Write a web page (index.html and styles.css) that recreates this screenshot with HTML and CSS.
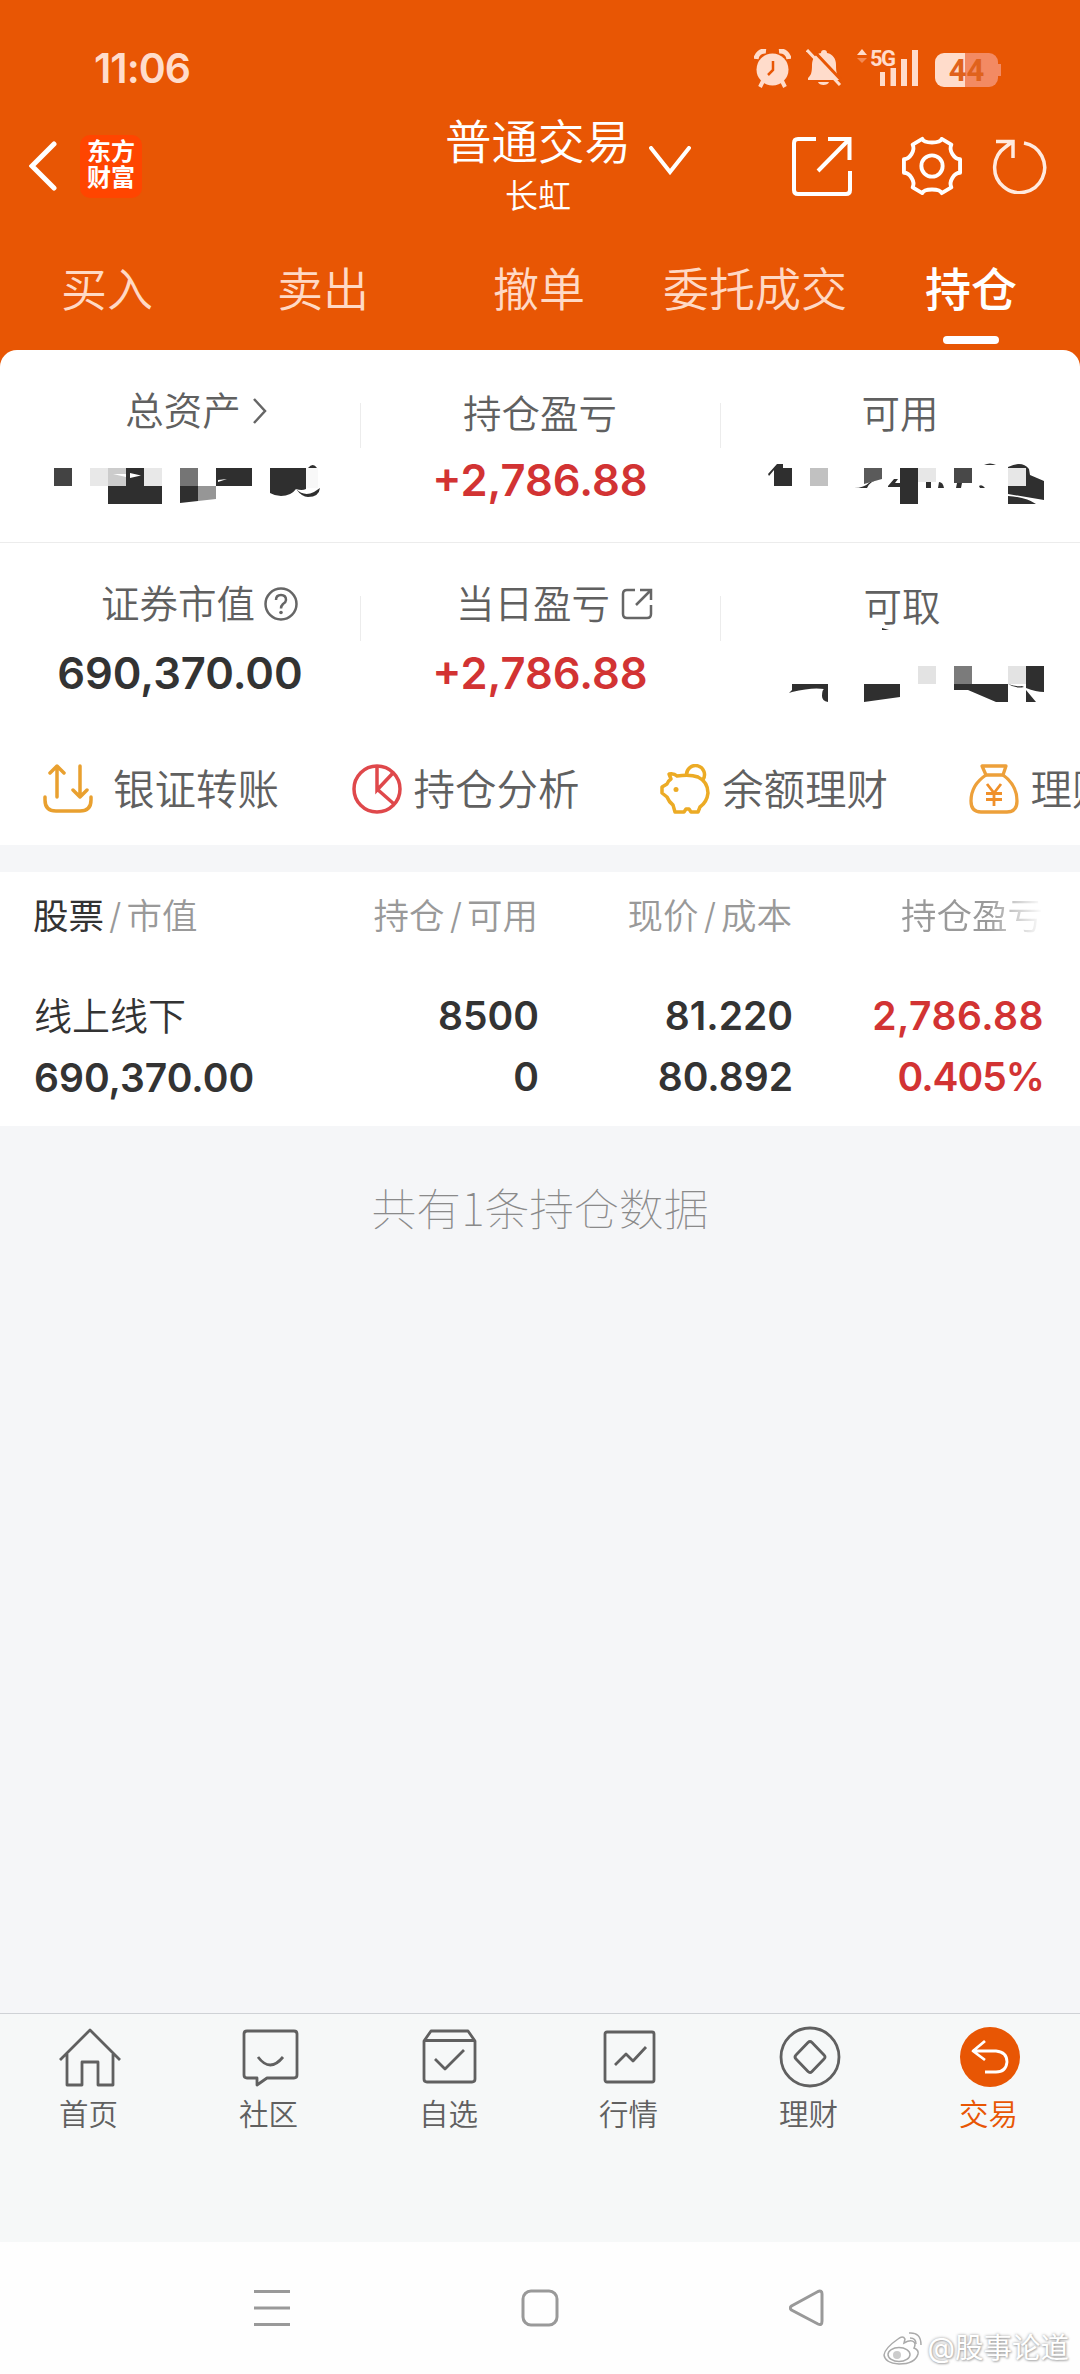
FILE: index.html
```html
<!DOCTYPE html>
<html lang="zh-CN">
<head>
  <meta charset="UTF-8">
  <meta name="viewport" content="width=device-width, initial-scale=1.0">
  <title>普通交易 - 持仓</title>
  <link rel="stylesheet" href="styles.css">
</head>
<body>

  <header class="header">
    <div class="statusbar">
      <span class="time">11:06</span>
      <div class="status-icons">
        <svg class="alarm" width="37" height="39" viewBox="0 0 37 39">
          <path d="M2 10 A9 9 0 0 1 12 2 M35 10 A9 9 0 0 0 25 2" fill="none" stroke="#ffdccb" stroke-width="5"/>
          <circle cx="18.500" cy="20.500" r="16" fill="#ffdccb"/>
          <path d="M9 32 L6 38 M28 32 L31 38" stroke="#ffdccb" stroke-width="4"/>
          <path d="M19 12 V21 L14 26" fill="none" stroke="#e85604" stroke-width="2.500"/>
        </svg>
        <svg class="bell" width="36" height="38" viewBox="0 0 36 38">
          <path d="M18 1 c2 0 3 1 3 3 c6 1 9 6 9 12 c0 8 1 10 4 13 v2 H2 v-2 c3 -3 4 -5 4 -13 c0 -6 3 -11 9 -12 c0 -2 1 -3 3 -3z M12 33 h11 c-1 4 -10 4 -11 0z" fill="#ffdccb"/>
          <path d="M4 -2 L38 34" stroke="#e85604" stroke-width="3"/>
          <path d="M1 1 L34 36" stroke="#ffdccb" stroke-width="3"/>
        </svg>
        <svg class="signal" width="62" height="54" viewBox="0 -8 62 54">
          <path d="M0 6 L5 0 L10 6z" fill="#ffdccb"/>
          <path d="M0 9 L5 14 L10 9z" fill="#f38a55"/>
          <text x="13" y="16.500" class="net">5G</text>
          <path d="M23 23h5v14h-5z M33.500 19h5.500v18h-5.500z M44 10h6v27h-6z M55 1h6v36h-6z" fill="#ffdccb"/>
        </svg>
        <div class="battery"><span>44</span></div>
      </div>
    </div>

    <div class="titlebar">
      <div class="left">
        <svg width="28" height="50" viewBox="0 0 28 50"><path d="M25 3 L3 25 L25 47" fill="none" stroke="#fff" stroke-width="5" stroke-linecap="round"/></svg>
        <div class="logo">东方<br>财富</div>
      </div>
      <div class="title">
        <h1>普通交易
          <svg width="42" height="29" viewBox="0 0 42 29"><path d="M2 2 L21 26 L40 2" fill="none" stroke="#fff" stroke-width="4" stroke-linecap="round"/></svg>
        </h1>
        <p>长虹</p>
      </div>
      <div class="actions">
        <svg class="share" width="60" height="60" viewBox="0 0 60 60"><path d="M24 3 H6 Q2 3 2 7 V54 Q2 58 6 58 H54 Q58 58 58 54 V35 M36 3 H57.500 V24 M57 3.500 L26 35" fill="none" stroke="#fff" stroke-width="4"/></svg>
        <svg class="gear" width="60" height="60" viewBox="0 0 62 62">
          <path d="M21 3 C23 8 39 8 41 3 L51 9 C48 15 54 24 60 24 V38 C54 38 48 47 51 53 L41 59 C39 54 23 54 21 59 L11 53 C14 47 8 38 2 38 V24 C8 24 14 15 11 9z" fill="none" stroke="#fff" stroke-width="4" stroke-linejoin="round"/>
          <circle cx="31" cy="31" r="11" fill="none" stroke="#fff" stroke-width="4"/>
        </svg>
        <svg width="56" height="56" viewBox="0 0 56 56"><path d="M33 5 A25 25 0 1 1 14.500 9 L21 4 M5 3.500 H22 V20" fill="none" stroke="#ffeadf" stroke-width="3.500"/></svg>
      </div>
    </div>

    <nav class="tabs">
      <a>买入</a>
      <a>卖出</a>
      <a>撤单</a>
      <a>委托成交</a>
      <a class="active">持仓</a>
    </nav>
  </header>

  <section class="assets">
    <div class="asset-row">
      <div class="cell">
        <div class="label total-label">总资产<svg class="more" width="15" height="28" viewBox="0 0 15 28"><path d="M2 2 L13 14 L2 26" fill="none" stroke="#666" stroke-width="2.500"/></svg></div>
        <svg class="mosaic" width="360" height="50" viewBox="0 455 360 50">
          <path d="M54 468h18v18h-18z" fill="#434343"/>
          <path d="M90 468h18v18h-18z M144 468h18v18h-18z" fill="#e8e8e8"/>
          <path d="M108 468h18v18h-18z" fill="#ccc"/>
          <path d="M180 468h18v18h-18z" fill="#757575"/>
          <path d="M198 486h18v13l-18 2z" fill="#969696"/>
          <path d="M126 468h18v18h18v18h-54v-18h18z M180 486h18v15l-18 2z M216 468h36v18h-36z M270 468h36v21q-4 2 -10 0 q-5 7 -15 7 q-6 0 -11 -3z M308 468q5 -6 9 0z M296 489q8 8 18 3l6 -4q-1 9 -12 9q-6 0 -12 -8z" fill="#2f2f2f"/>
          <path d="M306 468h12v20h-12z" fill="#f8f8f8"/>
          <path d="M113 474l13 0v3z M130 473l11 2.500l-11 2.500z M218 480l9 -1l-9 3z" fill="#fff"/>
        </svg>
      </div>
      <div class="cell">
        <div class="label low">持仓盈亏</div>
        <div class="value red">+2,786.88</div>
      </div>
      <div class="cell">
        <div class="label low">可用</div>
        <svg class="mosaic" width="360" height="50" viewBox="720 455 360 50">
          <path d="M774 468h18v18h-18z M768 474l9 -10h6v4l-9 2l-5 6z M854 488q10 0 16 -6l8 -2q-8 1 -11 8z M888 486l6 -7h4l-3 4h5v4h-12z M900 468h18v36h-18z M926 482h5v6h-5z M939 482q4 0 5 6h-6z M957 483h5l-1 5h-5z M979 486q3 -2 6 2h-5z M984 465q6 -3 12 0z M1008 467q14 -7 21 2l1 6l14 6v19l-36 -6z M1008 496q18 1 28 8h-28z" fill="#2f2f2f"/>
          <path d="M810 468h18v18h-18z" fill="#c1c1c1"/>
          <path d="M864 468h18v11l-18 5z" fill="#5a5a5a"/>
          <path d="M918 468h18v14h-18z M1008 468h18v18h-18z" fill="#e7e7e7"/>
          <path d="M954 468h18v15h-18z" fill="#484848"/>
        </svg>
      </div>
    </div>

    <div class="asset-row">
      <div class="cell">
        <div class="label">证券市值<svg class="help" width="34" height="34" viewBox="0 0 34 34"><circle cx="17" cy="17" r="15.500" fill="none" stroke="#666" stroke-width="2.500"/><path d="M12 13 Q12 8 17 8 Q22 8 22 13 Q22 15 19 17 Q17 19 17 21.500" fill="none" stroke="#666" stroke-width="2.500"/><circle cx="17" cy="25.500" r="1.800" fill="#666"/></svg></div>
        <div class="value">690,370.00</div>
      </div>
      <div class="cell">
        <div class="label today">当日盈亏<svg class="open" width="32" height="32" viewBox="0 0 32 32"><path d="M14 2 H6 Q2 2 2 6 V26 Q2 30 6 30 H26 Q30 30 30 26 V17 M19 2 H30 V12 M29.500 2.500 L15 17" fill="none" stroke="#666" stroke-width="2.500"/></svg></div>
        <div class="value red">+2,786.88</div>
      </div>
      <div class="cell">
        <div class="label low last">可取</div>
        <svg class="mosaic" width="360" height="75" viewBox="720 628 360 75">
          <path d="M882 628l7 2h-7z M792 684h36v18q-6 -1 -6 -6q0 -6 2 -7q-12 -2 -32 3l-3 1l3 -3z M864 684h36v13l-36 5z M954 684h54v18h-12l-28 -12h-14z M1008 684q8 3 14 2l2 1q-8 2 -16 -3z M1026 666h18v26q-8 0 -18 -4z M1026 690l10 12h-10z" fill="#2f2f2f"/>
          <path d="M918 666h18v18h-18z M1008 666h18v18h-18z" fill="#e3e3e3"/>
          <path d="M954 666h18v18h-18z" fill="#7b7b7b"/>
        </svg>
      </div>
    </div>

    <div class="shortcuts">
      <a class="first">
        <svg width="50" height="50" viewBox="0 0 50 50" fill="none" stroke="#e9a02f" stroke-width="3.500" stroke-linecap="round" stroke-linejoin="round"><path d="M14 33 V3 M7 9 L14 2 L21 9 M37 2 V33 M30 26 L37 33 L44 26 M2 33 V36 Q2 47 13 47 H37 Q48 47 48 36 V33"/></svg>
        <span>银证转账</span>
      </a>
      <a>
        <svg width="50" height="50" viewBox="0 0 50 50" fill="none" stroke="#df484b" stroke-width="3.500"><circle cx="25" cy="25" r="23"/><path d="M25 2 V26 L41 9 M25 25 L42 40"/></svg>
        <span>持仓分析</span>
      </a>
      <a>
        <svg width="50" height="50" viewBox="0 0 50 50" fill="none" stroke="#ecab25" stroke-width="3.500" stroke-linejoin="round"><path d="M26.500 11 A9 9 0 1 1 43 15.500"/><path d="M9 10 Q14 9 17 12 Q30 10 38 13 Q48 18 48 29 Q47 38 40 43 L38 48 H31 L29 45 H26 L24 48 H15 L13 41 Q9 38 7 33 L2 29 V23 L7 20 Q8 17 11 15z"/><circle cx="16" cy="25.500" r="2.500" fill="#ecab25" stroke="none"/></svg>
        <span>余额理财</span>
      </a>
      <a>
        <svg width="50" height="50" viewBox="0 0 50 50" fill="none" stroke="#eda03a" stroke-width="3.300" stroke-linejoin="round"><path d="M13 2 H37 L34 11 H17z"/><path d="M17 11 Q2 21 2 37 Q2 48 12 48 H38 Q48 48 48 37 Q48 21 34 11"/><path stroke="#f0902a" stroke-width="2.800" d="M18 20 L25 29 L32 20 M25 29 V42 M17 29.500 H33 M17 35.500 H33"/></svg>
        <span>理财</span>
      </a>
    </div>
  </section>

  <section class="holdings">
    <div class="row head">
      <div><b>股票</b><i>/</i>市值</div>
      <div>持仓<i>/</i>可用</div>
      <div>现价<i>/</i>成本</div>
      <div class="fade">持仓盈亏</div>
    </div>
    <div class="row">
      <div><span class="name">线上线下</span><br>690,370.00</div>
      <div>8500<br>0</div>
      <div>81.220<br>80.892</div>
      <div class="red"><span class="profit">2,786.88</span><br><span class="rate">0.405%</span></div>
    </div>
  </section>

  <p class="total">共有1条持仓数据</p>

  <nav class="tabbar">
    <a>
      <svg width="62" height="62" viewBox="0 0 62 62"><path d="M1 34 L31 4 L61 34 M8 28 V59 H23 V36 H39 V59 H54 V28"/></svg>
      <span>首页</span>
    </a>
    <a>
      <svg width="62" height="62" viewBox="0 0 62 62"><path d="M8 5 H55 Q58 5 58 8 V49 Q58 52 55 52 H28 L18 59 V52 H8 Q5 52 5 49 V8 Q5 5 8 5z M19 31 Q31 47 44 31"/></svg>
      <span>社区</span>
    </a>
    <a>
      <svg width="62" height="62" viewBox="0 0 62 62"><path d="M5 15 L12 5 H49 L56 15 V53 Q56 56 53 56 H8 Q5 56 5 53z M5 14.500 H56 M16 33 L26 43 L45 24"/></svg>
      <span>自选</span>
    </a>
    <a>
      <svg width="62" height="62" viewBox="0 0 62 62"><rect x="6" y="6" width="49" height="50" rx="2"/><path d="M16 39 L27 28 L34 35 L47 21"/></svg>
      <span>行情</span>
    </a>
    <a>
      <svg width="62" height="62" viewBox="0 0 62 62"><circle cx="31" cy="31" r="29"/><path d="M29 16.500 Q31 14.500 33 16.500 L45 29 Q47 31 45 33 L33 45.500 Q31 47.500 29 45.500 L17 33 Q15 31 17 29z"/></svg>
      <span>理财</span>
    </a>
    <a class="active">
      <svg width="62" height="62" viewBox="0 0 62 62"><circle class="disc" cx="31" cy="31" r="30"/><path d="M26 15 L14 25 L26 34 M14 25 H37 Q48 26 48 36 Q47 46 37 46 H26"/></svg>
      <span>交易</span>
    </a>
  </nav>

  <footer class="sysnav">
    <svg width="38" height="38" viewBox="0 0 38 38"><path d="M1 2.500 H37 M1 19 H37 M1 35.500 H37"/></svg>
    <svg width="38" height="38" viewBox="0 0 38 38"><rect x="2" y="2" width="34" height="34" rx="8"/></svg>
    <svg width="38" height="38" viewBox="0 0 38 38"><path d="M29 2.500 Q33 1 33 5 V32 Q33 37 29 35 L2.500 21 Q0 19 2.500 17z"/></svg>
    <div class="watermark">
      <svg width="40" height="34" viewBox="0 0 40 34">
        <path d="M15 8 Q20 4 22 8 L21 12 Q28 8 31 11 Q33 13 31 17 Q36 19 35 23 Q32 33 16 33 Q2 32 1 24 Q2 17 15 8z"/>
        <ellipse cx="16" cy="23.500" rx="11" ry="7"/>
        <circle class="eye" cx="14" cy="24" r="4"/>
        <path class="wave" d="M26 2 Q38 1 38 14 M27 7 Q33 7 33 13"/>
      </svg>
      @股事论道
    </div>
  </footer>

</body>
</html>
```

FILE: styles.css
```css
* {
  box-sizing: border-box;
}

body {
  margin: 0;
  width: 1080px;
  height: 2374px;
  display: flex;
  flex-direction: column;
  overflow: hidden;
  background-color: #f5f6f8;
  color: #333;
  font-family: Inter, "Noto Sans CJK SC", sans-serif;
  font-weight: 350;
}

svg {
  display: block;
  flex: none;
}

h1, p {
  margin: 0;
  font-weight: inherit;
}

/* header */
.header {
  height: 374px;
  margin-bottom: -24px;
  flex: none;
  background-color: #e85604;
  color: #fff;
}

.statusbar {
  display: flex;
  justify-content: space-between;
  align-items: center;
  height: 108px;
  padding: 28px 79px 0 94px;
}

.time {
  font-size: 41px;
  font-weight: 600;
  letter-spacing: -1px;
  color: #ffdccb;
}

.status-icons {
  display: flex;
  align-items: center;
}

.bell {
  margin-left: 15px;
}

.signal {
  margin-left: 15px;
}

.net {
  font-family: Roboto, sans-serif;
  font-size: 22px;
  font-weight: 700;
  fill: #ffdccb;
  letter-spacing: -1.5px;
}

.battery {
  position: relative;
  width: 63px;
  height: 34px;
  margin: 4px 3px 0 16px;
  border-radius: 9px;
  background: linear-gradient(90deg, #ffdccb 48%, #f38a63 48%);
  color: #e0621c;
  font: 700 31px/35px Roboto, sans-serif;
  text-align: center;
}

.battery::after {
  content: "";
  position: absolute;
  right: -3px;
  top: 11px;
  width: 3px;
  height: 12px;
  background-color: #f38a63;
}

.titlebar {
  display: grid;
  grid-template-columns: 1fr 188px 1fr;
  align-items: center;
  height: 116px;
  padding: 0 33px 0 29px;
}

.left {
  display: flex;
  align-items: center;
  gap: 23px;
}

.logo {
  width: 62px;
  height: 63px;
  padding-top: 4px;
  border-radius: 10px;
  background-color: #ff4500;
  font-size: 24px;
  font-weight: 700;
  line-height: 26px;
  text-align: center;
}

.title {
  text-align: center;
}

.title h1 {
  position: relative;
  font-size: 46.500px;
  line-height: 58px;
  white-space: nowrap;
}

.title h1 svg {
  position: absolute;
  right: -59px;
  top: 33px;
}

.title p {
  padding-top: 2px;
  font-size: 33px;
  line-height: 46px;
}

.actions {
  display: flex;
  justify-content: flex-end;
  align-items: center;
}

.gear {
  margin: 0 29px 0 50px;
}

.tabs {
  display: grid;
  grid-template-columns: repeat(5, 216px);
  margin-left: -1px;
}

.tabs a {
  padding-top: 33px;
  color: #ffd9c5;
  font-size: 46px;
  line-height: 64px;
  text-align: center;
}

.tabs .active {
  color: #fff;
  font-weight: 500;
}

.tabs .active::after {
  content: "";
  display: block;
  width: 56px;
  height: 8px;
  margin: 15px auto 0;
  border-radius: 4px;
  background-color: #fff;
}

/* assets */
.assets {
  height: 495px;
  flex: none;
  border-radius: 17px 17px 0 0;
  background-color: #fff;
  overflow: hidden;
}

.asset-row {
  display: grid;
  grid-template-columns: repeat(3, 360px);
  height: 193px;
  border-bottom: 1px solid #ececec;
}

.asset-row + .asset-row {
  height: 174px;
  border-bottom: none;
}

.cell {
  position: relative;
  padding-top: 33px;
}

.cell + .cell::before {
  content: "";
  position: absolute;
  left: 0;
  top: 53px;
  width: 1px;
  height: 45px;
  background-color: #ececec;
}

.label {
  display: flex;
  justify-content: center;
  align-items: center;
  height: 50px;
  padding-left: 39px;
  color: #606060;
  font-size: 38.500px;
}

.label svg {
  margin-top: 6px;
}

.total-label {
  padding-left: 31px;
}

.today {
  padding-left: 29px;
}

.low {
  padding: 5px 0 0;
}

.last {
  padding-left: 4px;
}

.more {
  margin: 0 -1px 0 11px;
}

.help {
  margin-left: 9px;
}

.open {
  margin-left: 11px;
}

.value {
  margin-top: 22px;
  font-size: 43.500px;
  font-weight: 600;
  line-height: 50px;
  text-align: center;
}

.red {
  color: #d23333;
}

.mosaic {
  margin-top: 22px;
}

.asset-row + .asset-row .mosaic {
  margin-top: 2px;
}

.shortcuts {
  display: flex;
  padding: 47px 0 0 43px;
}

.shortcuts a {
  display: flex;
  flex: none;
  align-items: center;
  gap: 12px;
  width: 308.500px;
  height: 50px;
  color: #606060;
  font-size: 41.500px;
  white-space: nowrap;
}

.shortcuts span {
  margin-top: -4px;
}

.shortcuts .first {
  gap: 20px;
}

/* holdings */
.holdings {
  height: 254px;
  margin-top: 27px;
  flex: none;
  background-color: #fff;
}

.row {
  display: grid;
  grid-template-columns: 300px 205px 254px 251px;
  padding: 17px 36px 0 34px;
  font-size: 39px;
  font-weight: 600;
  line-height: 61px;
}

.row > div + div {
  text-align: right;
}

.row.head {
  height: 96px;
  padding: 18px 36px 0 33px;
  color: #999;
  font-size: 35.500px;
  font-weight: 350;
  line-height: 54px;
}

.head b {
  color: #333;
  font-weight: 400;
}

.head i {
  margin: 0 5px;
  font-style: normal;
}

.name {
  font-size: 38px;
  font-weight: 350;
}

.profit {
  letter-spacing: 0.500px;
}

.rate {
  letter-spacing: -1px;
}

.fade {
  -webkit-mask-image: linear-gradient(90deg, #000 78%, transparent 100%);
  mask-image: linear-gradient(90deg, #000 78%, transparent 100%);
}

.total {
  flex: 1;
  padding-top: 49px;
  color: #8a8a8a;
  font-family: "Noto Sans CJK SC", sans-serif;
  font-size: 44.800px;
  font-weight: 100;
  line-height: 64px;
  text-align: center;
}

/* bottom bars */
.tabbar {
  display: grid;
  grid-template-columns: repeat(6, 180px);
  height: 229px;
  flex: none;
  padding-top: 12px;
  border-top: 1px solid #cfd2d6;
  background-color: #f6f8f8;
}

.tabbar a {
  color: #606060;
  font-size: 29.500px;
  line-height: 52px;
  text-align: center;
}

.tabbar span {
  margin-right: 3px;
}

.tabbar svg {
  margin: 0 auto;
  fill: none;
  stroke: #606060;
  stroke-width: 2.800;
  stroke-linejoin: round;
}

.tabbar .active {
  color: #e85604;
}

.tabbar .active svg {
  stroke: #fff;
}

.active .disc {
  fill: #e85604;
  stroke: none;
}

.sysnav {
  position: relative;
  display: flex;
  justify-content: center;
  gap: 230px;
  height: 132px;
  flex: none;
  padding-top: 47px;
  background-color: #fefefe;
}

.sysnav > svg {
  fill: none;
  stroke: #999;
  stroke-width: 3;
}

.watermark {
  position: absolute;
  right: 11px;
  bottom: 6px;
  display: flex;
  align-items: center;
  gap: 4px;
  color: #fff;
  font-size: 28.500px;
  font-weight: 400;
  line-height: 40px;
  text-shadow: 0 0 3px #999, 1px 1px 2px #bbb;
}

.watermark svg {
  fill: #fff;
  stroke: #aaa;
  stroke-width: 1.500;
}

.watermark .eye {
  fill: #ccc;
  stroke: none;
}

.watermark .wave {
  fill: none;
}
```
